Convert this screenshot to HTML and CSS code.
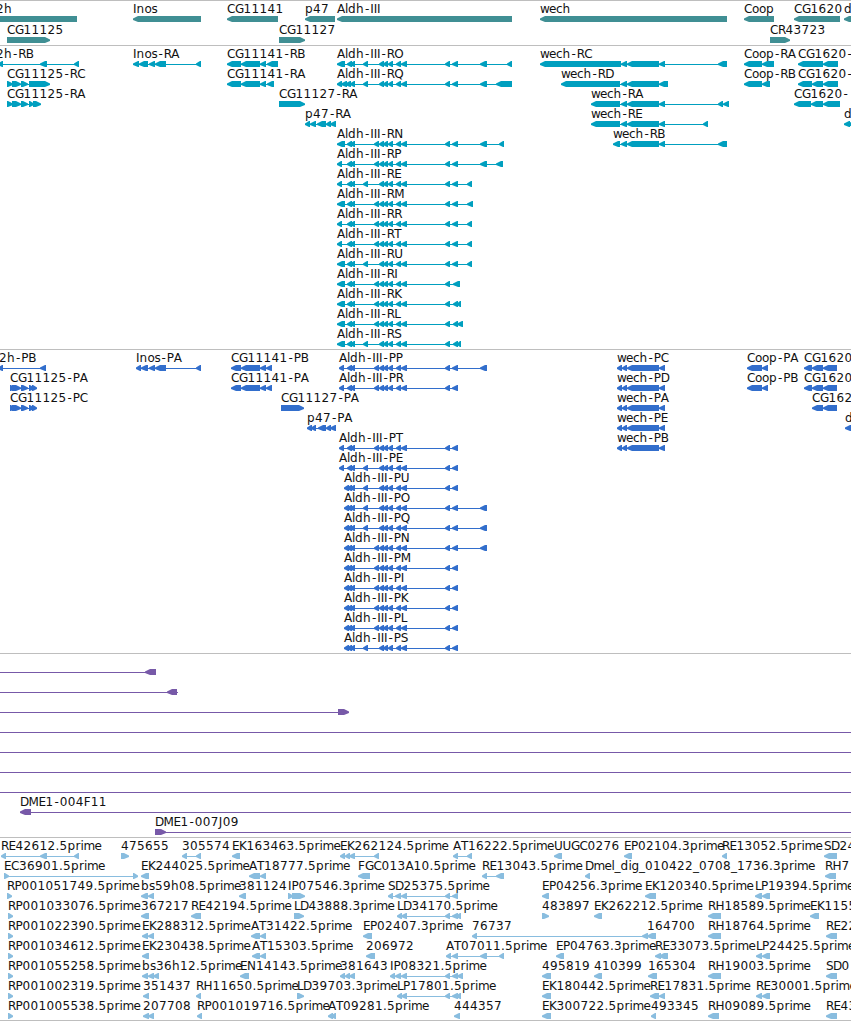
FILE: index.html
```html
<!DOCTYPE html>
<html lang="en">
<head>
    <meta charset="UTF-8">
    <meta name="viewport" content="width=device-width, initial-scale=1.0">
    <title>Genome Browser</title>
    <link rel="stylesheet" href="styles.css">
</head>
<body>
    <main class="browser">
        <section class="track genes" id="genes"></section>
        <section class="track transcripts" id="transcripts"></section>
        <section class="track cds" id="cds"></section>
        <section class="track clones" id="clones"></section>
        <section class="track ests" id="ests"></section>
    </main>
    <script src="script.js"></script>
</body>
</html>
```
FILE: styles.css
```css
* {
    margin: 0;
    padding: 0;
    box-sizing: border-box;
}

body {
    background: #ffffff;
    color: #000000;
    overflow: hidden;
}

.browser {
    display: flex;
    flex-direction: column;
    width: 851px;
    border-bottom: 1px solid #bebebe;
}

.track {
    border-top: 1px solid #bebebe;
    overflow: hidden;
}

.track svg {
    display: block;
    width: 100%;
    height: 100%;
}

.track text {
    font-family: "DejaVu Sans", sans-serif;
    font-size: 12px;
    fill: #111111;
    white-space: pre;
}

/* Track heights and glyph colours */
.genes {
    height: 45px;
    color: #408f94;
}

.transcripts {
    height: 304px;
    color: #009fbf;
}

.cds {
    height: 304px;
    color: #326ecc;
}

.clones {
    height: 184px;
    color: #7759a8;
}

.ests {
    height: 183px;
    color: #89bddf;
}

.glyph {
    fill: currentColor;
}
```
FILE: script.js
```javascript
// Exons shared by the Aldh-III isoforms
const mid = '379-384 383-388 388-393 396-401 401-407 445-450';
const mid2 = '374-379 ' + mid;
const pair = '347-352 350-355';
const body = '621-627 627-659';

// Each row is a list of features: "label|label x|strand|exons|line"
const tracks = {
    genes: { pitch: 21, rows: [
        ['2h|-4|.|-10-77', 'Inos|133|<|133-201', 'CG11141|227|<|227-278', 'p47|305|<|305-335',
         'Aldh-III|337|<|337-512', 'wech|540|<|540-727', 'Coop|744|<|744-774', 'CG1620|794|<|794-840', 'd|844|<|844-870'],
        ['CG11125|7|>|7-50', 'CG11127|279|>|279-305', 'CR43723|770|>|770-790']
    ]},
    transcripts: { pitch: 20, rows: [
        ['2h-RB|-4|<|-2-3 40-47 74-79', 'Inos-RA|133|<|133-139 139-148 149-155 155-166 196-201',
         'CG11141-RB|227|<|227-241 241-260 260-266 267-278',
         `Aldh-III-RO|337|<|337-345 ${pair} 363-368 ${mid} 452-458 480-487 507-512`,
         `wech-RC|540|<|540-621 ${body} 659-665 718-727`,
         'Coop-RA|744|<|744-762 762-774', 'CG1620-|798|<|798-823 823-838'],
        ['CG11125-RC|7|>|7-13 12-21 21-28 29-50', 'CG11141-RA|227|<|227-241 241-260 260-266 267-274',
         `Aldh-III-RQ|337|<|337-342 341-347 345-351 350-355 363-368 ${mid} 452-458 480-487 496-512`,
         `wech-RD|561|<|561-620 ${body} 659-668`,
         'Coop-RB|744|<|744-762 762-770', 'CG1620-|798|<|798-812 812-823 823-838'],
        ['CG11125-RA|7|>|7-13 12-21 21-28 29-34 33-41', 'CG11127-RA|279|>|279-305',
         `wech-RA|591|<|591-620 ${body} 659-665 718-723 723-729`, 'CG1620-|794|<|794-811 811-823 823-840'],
        ['p47-RA|305|<|305-310 310-316 317-326 326-331 330-336',
         `wech-RE|591|<|591-620 ${body} 659-665 703-708`, 'd|844|<|844-850 848-870'],
        [`Aldh-III-RN|337|<|337-345 ${pair} ${mid2} 452-458 480-487 499-504`,
         `wech-RB|613|<|613-620 ${body} 659-665 718-727`],
        [`Aldh-III-RP|337|<|337-342 ${pair} ${mid2} 452-458 480-487 496-503`],
        [`Aldh-III-RE|337|<|337-342 ${pair} 363-368 ${mid} 452-458 467-472`],
        [`Aldh-III-RM|337|<|337-345 ${pair} ${mid2} 452-458 467-473`],
        [`Aldh-III-RR|337|<|337-342 ${pair} ${mid2} 452-458 467-472`],
        [`Aldh-III-RT|337|<|337-342 ${pair} ${mid2} 452-458 467-472`],
        [`Aldh-III-RU|337|<|337-345 ${pair} 363-368 ${mid} 452-458 467-472`],
        [`Aldh-III-RI|337|<|337-345 ${pair} ${mid2} 453-460`],
        [`Aldh-III-RK|337|<|337-345 ${pair} ${mid2} 453-458 457-461`],
        [`Aldh-III-RL|337|<|337-345 ${pair} ${mid2} 453-458 457-463`],
        [`Aldh-III-RS|337|<|337-345 ${pair} 363-368 ${mid} 453-458 457-461`]
    ]},
    cds: { pitch: 20, rows: [
        ['2h-PB|-1|<|-2-3 40-46', 'Inos-PA|136|<|136-141 141-148 149-155 155-166 196-201',
         'CG11141-PB|231|<|231-241 241-260 260-266 266-272',
         `Aldh-III-PP|339|<|339-344 ${pair} ${mid2} 452-458 480-487`,
         'wech-PC|617|<|617-622 622-627 627-659 659-665',
         'Coop-PA|747|<|747-762 762-768', 'CG1620|804|<|804-812 812-823 823-837'],
        ['CG11125-PA|10|>|10-15 12-21 21-28 29-34 32-37', 'CG11141-PA|231|<|231-241 241-260 260-266 266-272',
         `Aldh-III-PR|339|<|339-344 ${pair} ${mid2} 452-458`,
         'wech-PD|617|<|617-622 622-627 627-659 659-665',
         'Coop-PB|747|<|747-762 762-768', 'CG1620|804|<|804-812 812-823 823-837'],
        ['CG11125-PC|10|>|10-15 12-21 21-28 29-34 32-37', 'CG11127-PA|281|>|281-304',
         'wech-PA|617|<|617-622 622-627 627-659 659-665', 'CG162|812|<|812-823 823-837'],
        ['p47-PA|307|<|307-312 311-316 318-326 326-331 330-336',
         'wech-PE|617|<|617-622 622-627 627-659 659-665', 'd|845|<|845-870'],
        [`Aldh-III-PT|339|<|339-344 ${pair} ${mid2} 452-458`, 'wech-PB|617|<|617-622 622-627 627-659 659-665'],
        [`Aldh-III-PE|339|<|339-344 ${pair} 363-368 ${mid} 452-458`],
        [`Aldh-III-PU|344|<|344-349 ${pair} 363-368 ${mid} 452-458`],
        [`Aldh-III-PO|344|<|344-349 ${pair} 363-368 ${mid} 452-458 480-487`],
        [`Aldh-III-PQ|344|<|344-349 ${pair} 363-368 ${mid} 452-458 480-487`],
        [`Aldh-III-PN|344|<|344-349 ${pair} ${mid2} 452-458 480-487`],
        [`Aldh-III-PM|344|<|344-349 ${pair} ${mid2} 452-458`],
        [`Aldh-III-PI|344|<|344-349 ${pair} ${mid2} 452-458`],
        [`Aldh-III-PK|344|<|344-349 ${pair} ${mid2} 452-458`],
        [`Aldh-III-PL|344|<|344-349 ${pair} ${mid2} 452-458`],
        [`Aldh-III-PS|344|<|344-349 ${pair} 363-368 ${mid} 452-458`]
    ]},
    clones: { pitch: 20, rows: [
        ['|0|<|145-156|0-156'],
        ['|0|<|167-177|0-178'],
        ['|0|>|338-349|0-348'],
        ['|0|<||0-851'],
        ['|0|<||0-851'],
        ['|0|<||0-851'],
        ['|0|<||0-851'],
        ['DME1-004F11|20|<|20-31|20-851'],
        ['DME1-007J09|155|>|155-166|155-851']
    ]},
    ests: { pitch: 20, rows: [
        ['RE42612.5prime|1|<|1-6 40-47 74-79', '475655|121|>|121-129', '305574|182|<|182-187 196-201',
         'EK163463.5prime|232|<|232-240', 'EK262124.5prime|340|<|340-345 345-350 349-355 374-379',
         'AT16222.5prime|453|<|453-458 467-472', 'UUGC0276|554|<|554-562', 'EP02104.3prime|624|<|624-632',
         'RE13052.5prime|722|<|722-727', 'SD24|824|<|824-837'],
        ['EC36901.5prime|4|>|4-9 133-138', 'EK244025.5prime|141|<|141-149', 'AT18777.5prime|249|<|249-260 260-266',
         'FGC013A10.5prime|358|<|358-370', 'RE13043.5prime|482|<|482-487 496-504',
         'Dmel_dig_010422_0708_1736.3prime|585|<|585-590', 'RH7|825|<|825-836'],
        ['RP001051749.5prime|7|>|7-12', 'bs59h08.5prime|141|<|141-148 148-154', '381124|239|<|239-246',
         'IP07546.3prime|288|>|288-293 292-305', 'SD25375.5prime|388|<|388-393 395-401 401-407 445-450 452-458',
         'EP04256.3prime|542|<|542-549', 'EK120340.5prime|645|<|645-656', 'LP19394.5prime|755|<|755-762 762-770'],
        ['RP001033076.5prime|8|>|8-13', '367217|141|<|141-149', 'RE42194.5prime|191|<|191-201',
         'LD43888.3prime|294|>|294-304', 'LD34170.5prime|397|<|397-402 401-407 445-450 452-458 456-461',
         '483897|542|>|542-549', 'EK262212.5prime|594|<|594-602', 'RH18589.5prime|708|<|708-721', 'EK1155|810|<|810-819'],
        ['RP001022390.5prime|8|>|8-13', 'EK288312.5prime|142|<|142-148 148-154', 'AT31422.5prime|251|<|251-260 260-266',
         'EP02407.3prime|363|<|363-372', '76737|472|<|472-477 642-648', '164700|647|<|647-656',
         'RH18764.5prime|708|<|708-721', 'RE22|826|<|826-837'],
        ['RP001034612.5prime|8|>|8-13', 'EK230438.5prime|142|<|142-149', 'AT15303.5prime|252|<|252-260 260-266',
         '206972|366|<|366-375', 'AT07011.5prime|446|<|446-451 452-458 480-487 499-504',
         'EP04763.3prime|556|<|556-564', 'RE33073.5prime|655|<|655-661 659-668', 'LP24425.5prime|756|<|756-762 762-770'],
        ['RP001055258.5prime|8|>|8-13', 'bs36h12.5prime|142|<|142-148 148-154 153-159', 'EN14143.5prime|240|<|240-249',
         '381643|340|<|340-345 345-350 349-355', 'IP08321.5prime|390|<|390-395 395-401 401-407 445-450 452-458 457-463',
         '495819|542|<|542-551', '410399|594|<|594-602', '165304|648|<|648-657', 'RH19003.5prime|708|<|708-721', 'SD0|826|<|826-837'],
        ['RP001002319.5prime|8|>|8-13', '351437|143|<|143-149', 'RH11650.5prime|196|<|196-201',
         'LD39703.3prime|297|>|297-304', 'LP17801.5prime|397|<|397-402 401-407 445-450 452-458 456-461',
         'EK180442.5prime|542|<|542-551', 'RE17831.5prime|650|<|650-659 659-665', 'RE30001.5prime|756|<|756-762 762-770'],
        ['RP001005538.5prime|8|>|8-13', '207708|143|<|143-149 148-154', 'RP001019716.5prime|197|<|197-202',
         'AT09281.5prime|328|<|328-333 331-336', '444357|454|<|454-460', 'EK300722.5prime|542|<|542-551',
         '493345|651|<|651-656', 'RH09089.5prime|708|<|708-719', 'RE43|826|<|826-837']
    ]}
};

const advance = {
    A: 8, B: 7, C: 8, D: 8.5, E: 7, F: 7, G: 8.5, H: 9, I: 3.4, J: 4, K: 7.5, L: 6, M: 10, N: 9, O: 9,
    P: 7, Q: 9, R: 7.5, S: 7, T: 7, U: 8.5, '-': 6.3, '.': 4, _: 6,
    b: 8, c: 6.5, d: 8, e: 7, g: 7.5, h: 8, i: 3, l: 3, m: 11, n: 8, o: 7, p: 8, r: 5, s: 6, w: 9
};

function labelPositions(label, x) {
    return [...label].map(ch => {
        const at = ch === '-' ? x + 1 : x;
        x += advance[ch] || 8;
        return at.toFixed(1);
    }).join(' ');
}

// Exon block with an arrow tip on its strand side
function drawExon(s, e, strand, y) {
    if (strand === '.') return `<rect class="glyph" x="${s}" y="${y}" width="${e - s}" height="6"/>`;
    const tip = Math.min(5, e - s - 1);
    const points = strand === '<'
        ? [[s, y + 2.5], [s + tip, y], [e, y], [e, y + 6], [s + tip, y + 6], [s, y + 4]]
        : [[e, y + 2.5], [e - tip, y], [s, y], [s, y + 6], [e - tip, y + 6], [e, y + 4]];
    return `<polygon class="glyph" points="${points.join(' ')}"/>`;
}

function drawFeature(spec, row, pitch) {
    const [label, x, strand, exonText, line] = spec.split('|');
    const y = 15 + row * pitch;
    const exons = exonText ? exonText.split(' ').map(t => t.match(/^(-?\d+)-(\d+)$/).slice(1).map(Number)) : [];
    const [from, to] = line ? line.split('-').map(Number) : [exons[0][0], exons[exons.length - 1][1]];
    let out = `<rect class="glyph" x="${from}" y="${y + 3}" width="${to - from}" height="1"/>`;
    exons.forEach(([s, e]) => out += drawExon(s, e, strand, y));
    if (label) out += `<text x="${labelPositions(label, Number(x))}" y="${y - 3}">${label}</text>`;
    return out;
}

Object.keys(tracks).forEach(id => {
    const { pitch, rows } = tracks[id];
    const glyphs = rows.map((row, i) => row.map(spec => drawFeature(spec, i, pitch)).join('')).join('');
    document.getElementById(id).innerHTML = `<svg>${glyphs}</svg>`;
});
```
